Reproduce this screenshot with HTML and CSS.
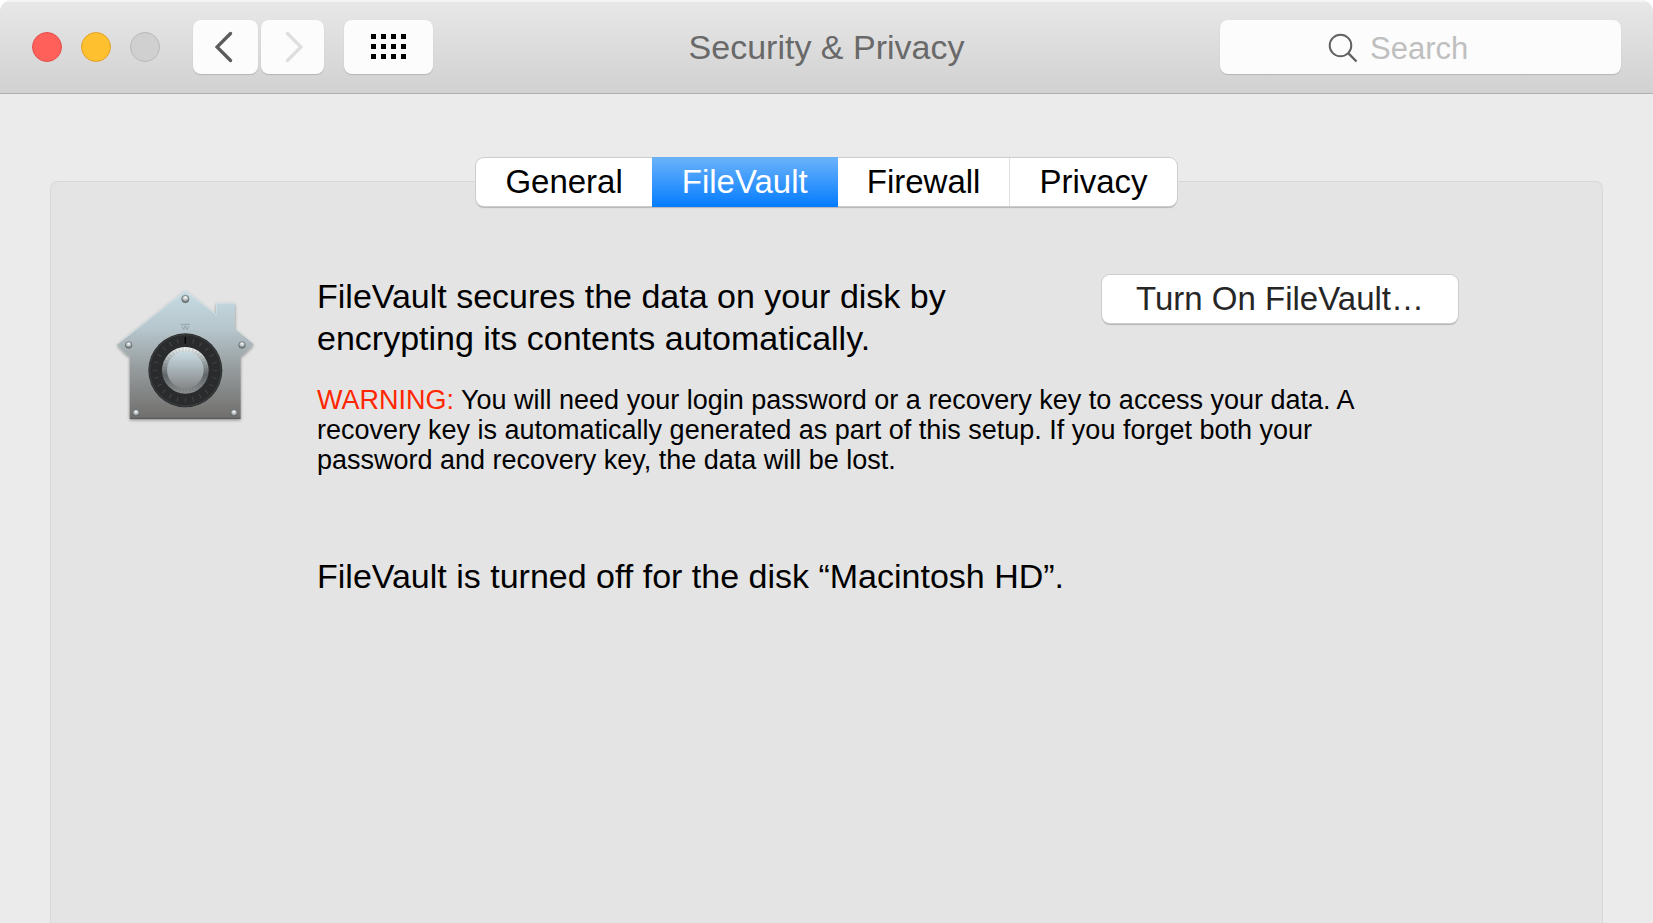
FILE: index.html
```html
<!DOCTYPE html>
<html lang="en">
<head>
<meta charset="utf-8">
<title>Security &amp; Privacy</title>
<link rel="stylesheet" href="styles.css">
</head>
<body>
<div class="window">
  <header class="titlebar">
    <div class="controls">
      <div class="lights">
        <button class="light light-close" type="button" aria-label="Close"></button>
        <button class="light light-minimize" type="button" aria-label="Minimize"></button>
        <button class="light light-zoom" type="button" aria-label="Zoom" disabled></button>
      </div>
      <div class="nav">
        <button class="tool tool-back" type="button" aria-label="Back">
          <svg width="18" height="32" viewBox="0 0 18 32"><path d="M15.500 2.500 2 16l13.500 13.500" fill="none" stroke="#5c5c5c" stroke-width="3.300" stroke-linecap="round" stroke-linejoin="miter"/></svg>
        </button>
        <button class="tool tool-forward" type="button" aria-label="Forward" disabled>
          <svg width="18" height="32" viewBox="0 0 18 32"><path d="M2.500 2.500 16 16 2.500 29.500" fill="none" stroke="#dedede" stroke-width="3.300" stroke-linecap="round" stroke-linejoin="miter"/></svg>
        </button>
      </div>
      <button class="tool tool-all" type="button" aria-label="Show All">
        <svg width="35" height="26" viewBox="0 0 35 26"><path d="M0 0h5v5H0zM10 0h5v5h-5zM20 0h5v5h-5zM30 0h5v5h-5zM0 10h5v5H0zM10 10h5v5h-5zM20 10h5v5h-5zM30 10h5v5h-5zM0 20h5v5H0zM10 20h5v5h-5zM20 20h5v5h-5zM30 20h5v5h-5z" fill="#000"/></svg>
      </button>
    </div>
    <h1 class="title">Security &amp; Privacy</h1>
    <label class="search">
      <svg class="search-icon" width="30" height="30" viewBox="0 0 30 30" aria-hidden="true"><circle cx="12.500" cy="12.500" r="10.800" fill="none" stroke="#626262" stroke-width="2"/><path d="M20.200 20.200 28.500 28.500" stroke="#626262" stroke-width="2.400"/></svg>
      <input class="search-input" type="search" placeholder="Search" aria-label="Search">
    </label>
  </header>

  <main class="content">
    <div class="tabs" role="tablist">
      <button class="tab" type="button" role="tab" aria-selected="false">General</button>
      <button class="tab tab-active" type="button" role="tab" aria-selected="true">FileVault</button>
      <button class="tab" type="button" role="tab" aria-selected="false">Firewall</button>
      <button class="tab" type="button" role="tab" aria-selected="false">Privacy</button>
    </div>
    <section class="panel" role="tabpanel" aria-label="FileVault">
      <svg class="vault" width="142" height="142" viewBox="43 48 426 426" aria-hidden="true">
        <defs>
          <linearGradient id="metal" x1="0" y1="0" x2="0" y2="1">
            <stop offset="0" stop-color="#c7dce4"/><stop offset=".3" stop-color="#b6c6cc"/><stop offset=".6" stop-color="#979d9f"/><stop offset="1" stop-color="#706e6c"/>
          </linearGradient>
          <linearGradient id="knob" x1="0" y1="0" x2="0" y2="1">
            <stop offset="0" stop-color="#c9dce3"/><stop offset="1" stop-color="#858788"/>
          </linearGradient>
          <linearGradient id="rim" x1="0" y1="0" x2="0" y2="1">
            <stop offset="0" stop-color="#f4f7f8"/><stop offset=".3" stop-color="#a5adaf"/><stop offset=".6" stop-color="#61676a"/><stop offset="1" stop-color="#8d9192"/>
          </linearGradient>
          <radialGradient id="rivet" cx=".5" cy=".3" r=".7">
            <stop offset="0" stop-color="#fff"/><stop offset=".5" stop-color="#b4bcbf"/><stop offset="1" stop-color="#555"/>
          </radialGradient>
          <filter id="shade" x="-10%" y="-10%" width="120%" height="120%"><feDropShadow dx="0" dy="4" stdDeviation="4" flood-opacity=".4"/></filter>
        </defs>
        <path d="M257 58 349 129V96h57v78l56 46-33 33h-6v190H90V253h-7l-31-33z" fill="url(#metal)" filter="url(#shade)"/>
        <path d="M54 219 257 60l93 71V98h54" fill="none" stroke="#d8e7ec" stroke-width="2"/>
        <path d="M91 442h331" stroke="#565452" stroke-width="3"/>
        <path d="M243 160h28M246 164l6 12 5-12 5 12 6-12" fill="none" stroke="#849399" stroke-width="2"/>
        <circle cx="257" cy="298" r="111" fill="#292b2c"/>
        <circle cx="257" cy="298" r="107" fill="none" stroke="#383b3c" stroke-width="4"/>
        <circle cx="257" cy="298" r="90" fill="none" stroke="#4c5152" stroke-width="14" stroke-dasharray="2 21.560" stroke-dashoffset="1"/>
        <path d="M257 198v20" stroke="#050505" stroke-width="4"/>
        <circle cx="257" cy="298" r="70" fill="url(#rim)"/>
        <circle cx="257" cy="298" r="62" fill="none" stroke="#505759" stroke-opacity=".15" stroke-width="12" stroke-dasharray="5 5"/>
        <circle cx="257" cy="297" r="55" fill="url(#knob)"/>
        <g fill="url(#rivet)" stroke="#5f686b" stroke-width="2">
          <circle cx="257" cy="84" r="11"/><circle cx="87" cy="222" r="10"/><circle cx="427" cy="222" r="10"/><circle cx="109" cy="426" r="10"/><circle cx="403" cy="426" r="10"/>
        </g>
      </svg>
      <div class="details">
        <div class="intro">
          <p class="lead">FileVault secures the data on your disk by encrypting its contents automatically.</p>
          <button class="action" type="button">Turn On FileVault…</button>
        </div>
        <p class="warning"><strong class="warning-label">WARNING:</strong> You will need your login password or a recovery key to access your data. A recovery key is automatically generated as part of this setup. If you forget both your password and recovery key, the data will be lost.</p>
        <p class="status">FileVault is turned off for the disk “Macintosh HD”.</p>
      </div>
    </section>
  </main>
</div>
</body>
</html>
```
FILE: styles.css
```css
* {
  box-sizing: border-box;
}

body {
  margin: 0;
  background: #fff;
  color: #000;
  font-family: "Liberation Sans", Arial, sans-serif;
  font-size: 33px;
}

button,
input {
  font: inherit;
}

h1,
p {
  margin: 0;
}

svg {
  display: block;
  flex: none;
}

.window {
  display: flex;
  flex-direction: column;
  min-height: 100vh;
  background: #ebebeb;
  border-radius: 12px 12px 0 0;
  overflow: hidden;
}

.titlebar {
  display: grid;
  grid-template-columns: 1fr auto 1fr;
  align-items: center;
  height: 94px;
  padding: 0 32px;
  background: linear-gradient(#e8e8e8, #d1d1d1);
  border-bottom: 1px solid #b1b1b1;
  box-shadow: inset 0 2px 0 #f4f4f4;
}

.controls {
  display: flex;
  align-items: center;
}

.lights {
  display: flex;
  gap: 19px;
  margin-right: 33px;
}

.light {
  width: 30px;
  height: 30px;
  padding: 0;
  border: 1px solid;
  border-radius: 50%;
}

.light-close {
  background: #ff6059;
  border-color: #e2514c;
}

.light-minimize {
  background: #ffc02f;
  border-color: #e0a22a;
}

.light-zoom {
  background: #d0d0d0;
  border-color: #b8b8b8;
}

.nav {
  display: flex;
  gap: 3px;
  margin-right: 20px;
}

.tool {
  display: flex;
  align-items: center;
  justify-content: center;
  height: 54px;
  padding: 0;
  background: #fcfcfc;
  border: 0;
  border-radius: 8px;
  box-shadow: 0 1px 1px #b4b4b4;
}

.tool-back {
  width: 65px;
  padding-right: 4px;
}

.tool-forward {
  width: 63px;
  padding-left: 2px;
}

.tool-all {
  width: 89px;
}

.title {
  padding-top: 2px;
  color: #696969;
  font-size: 34px;
  font-weight: 400;
}

.search {
  display: flex;
  align-items: center;
  justify-self: end;
  gap: 12px;
  width: 401px;
  height: 54px;
  padding-left: 108px;
  background: #fcfcfc;
  border-radius: 8px;
  box-shadow: 0 1px 1px #b4b4b4;
}

.search-icon {
  margin-top: 2px;
}

.search-input {
  flex: 1;
  min-width: 0;
  padding: 4px 0 0;
  background: none;
  border: 0;
  outline: 0;
  appearance: none;
  font-size: 31px;
}

.search-input::placeholder {
  color: #bfbfbf;
  opacity: 1;
}

.content {
  display: flex;
  flex: 1;
  flex-direction: column;
  padding: 64px 50px 0;
}

.tabs {
  display: flex;
  align-self: center;
  z-index: 1;
  height: 48px;
  margin-bottom: -25px;
  background: #fff;
  border-radius: 8px;
  box-shadow: 0 0 0 1px #cdcdcd, 0 2px 1px #b5b5b5;
}

.tab {
  padding: 0 29px;
  background: none;
  border: 0;
  color: #000;
}

.tab + .tab {
  border-left: 1px solid #e0e0e0;
}

.tab.tab-active {
  margin: -1px 0;
  padding: 0 30px;
  background: linear-gradient(#6cb3fa, #047cff);
  border: 0;
  color: #fff;
}

.tab-active + .tab {
  border-left: 0;
}

.panel {
  display: flex;
  flex: 1;
  align-items: flex-start;
  gap: 61px;
  padding: 93px 144px 40px 63px;
  background: #e4e4e4;
  border: 1px solid #d8d8d8;
  border-bottom: 0;
  border-radius: 8px 8px 0 0;
}

.vault {
  margin-top: 12px;
}

.details {
  flex: 1;
}

.intro {
  display: flex;
  align-items: flex-start;
  justify-content: space-between;
}

.lead {
  max-width: 660px;
  font-size: 34px;
  line-height: 42px;
}

.action {
  height: 48px;
  padding: 0 34px;
  background: #fff;
  border: 0;
  border-radius: 8px;
  box-shadow: 0 0 0 1px #cdcdcd, 0 2px 1px #b5b5b5;
  color: #262626;
}

.warning {
  max-width: 1080px;
  margin-top: 26px;
  font-size: 27px;
  line-height: 30px;
}

.warning-label {
  color: #ff2600;
  font-weight: 400;
}

.status {
  margin-top: 80px;
  font-size: 34px;
  line-height: 42px;
}
```
